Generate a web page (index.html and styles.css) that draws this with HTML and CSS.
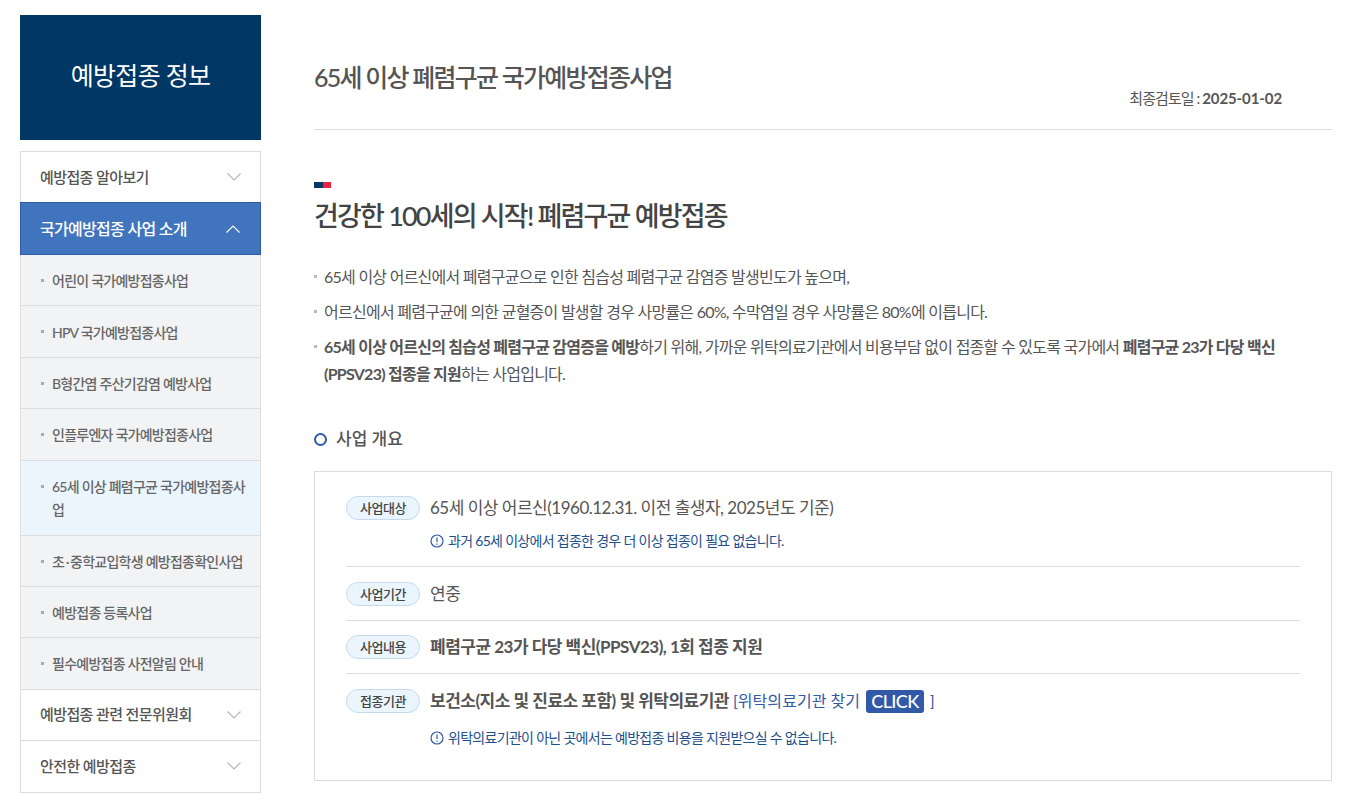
FILE: index.html
```html
<!DOCTYPE html>
<html lang="ko">
<head>
<meta charset="utf-8">
<title>65세 이상 폐렴구균 국가예방접종사업</title>
<link rel="stylesheet" href="styles.css">
</head>
<body>
<div class="page">
  <aside class="side">
    <div class="side-title">예방접종 정보</div>
    <nav class="menu">
      <a class="top">예방접종 알아보기<svg class="chev" viewBox="0 0 14 8"><path d="M.5.5 7 7 13.500.5"/></svg></a>
      <a class="top on">국가예방접종 사업 소개<svg class="chev" viewBox="0 0 14 8"><path d="M.5 7.500 7 1 13.500 7.500"/></svg></a>
      <ul class="sub">
        <li>어린이 국가예방접종사업</li>
        <li>HPV 국가예방접종사업</li>
        <li>B형간염 주산기감염 예방사업</li>
        <li>인플루엔자 국가예방접종사업</li>
        <li class="cur">65세 이상 폐렴구균 국가예방접종사업</li>
        <li>초<span class="dot">·</span>중학교입학생 예방접종확인사업</li>
        <li>예방접종 등록사업</li>
        <li>필수예방접종 사전알림 안내</li>
      </ul>
      <a class="top">예방접종 관련 전문위원회<svg class="chev" viewBox="0 0 14 8"><path d="M.5.5 7 7 13.500.5"/></svg></a>
      <a class="top">안전한 예방접종<svg class="chev" viewBox="0 0 14 8"><path d="M.5.5 7 7 13.500.5"/></svg></a>
    </nav>
  </aside>
  <main class="main">
    <header class="head">
      <h1>65세 이상 폐렴구균 국가예방접종사업</h1>
      <p class="date">최종검토일 : <b>2025-01-02</b></p>
    </header>
    <div class="mark"><i></i><i></i></div>
    <h2>건강한 100세의 시작! 폐렴구균 예방접종</h2>
    <ul class="intro">
      <li>65세 이상 어르신에서 폐렴구균으로 인한 침습성 폐렴구균 감염증 발생빈도가 높으며,</li>
      <li>어르신에서 폐렴구균에 의한 균혈증이 발생할 경우 사망률은 60%, 수막염일 경우 사망률은 80%에 이릅니다.</li>
      <li><b>65세 이상 어르신의 침습성 폐렴구균 감염증을 예방</b>하기 위해, 가까운 위탁의료기관에서 비용부담 없이 접종할 수 있도록 국가에서 <b>폐렴구균 23가 다당 백신(PPSV23) 접종을 지원</b>하는 사업입니다.</li>
    </ul>
    <h3><i class="ring"></i>사업 개요</h3>
    <section class="box">
      <div class="row first">
        <div class="line"><span class="pill">사업대상</span><span class="val">65세 이상 어르신(1960.12.31. 이전 출생자, 2025년도 기준)</span></div>
        <p class="note"><svg class="info" viewBox="0 0 14 14"><circle cx="7" cy="7" r="6"/><path d="M7 3.500v4.500M7 9.500v1.300"/></svg>과거 65세 이상에서 접종한 경우 더 이상 접종이 필요 없습니다.</p>
      </div>
      <div class="row second">
        <div class="line"><span class="pill">사업기간</span><span class="val">연중</span></div>
      </div>
      <div class="row third">
        <div class="line"><span class="pill">사업내용</span><span class="val"><b>폐렴구균 23가 다당 백신(PPSV23), 1회 접종 지원</b></span></div>
      </div>
      <div class="row last">
        <div class="line"><span class="pill">접종기관</span><span class="val"><b>보건소(지소 및 진료소 포함) 및 위탁의료기관</b> <span class="link">[위탁의료기관 찾기 <em class="click">CLICK</em> ]</span></span></div>
        <p class="note"><svg class="info" viewBox="0 0 14 14"><circle cx="7" cy="7" r="6"/><path d="M7 3.500v4.500M7 9.500v1.300"/></svg>위탁의료기관이 아닌 곳에서는 예방접종 비용을 지원받으실 수 없습니다.</p>
      </div>
    </section>
  </main>
</div>
</body>
</html>
```
FILE: styles.css
```css
* { box-sizing: border-box; }
html, body { margin: 0; height: 795px; overflow: hidden; background: #fff; }
body { font-family: Lato, "Noto Sans CJK KR", sans-serif; color: #555; }
ul { list-style: none; margin: 0; padding: 0; }
h1, h2, h3, p { margin: 0; }
.page { display: flex; gap: 53px; padding: 15px 15px 0 20px; }
.side { width: 241px; flex: none; }
.side-title { height: 125px; padding-bottom: 7px; background: #003764; color: #fff; font-size: 25px; letter-spacing: -.7px; display: flex; align-items: center; justify-content: center; }
.menu { margin-top: 11px; border: 1px solid #ddd; border-width: 1px 1px 0; }
.top { height: 51.500px; display: flex; align-items: center; justify-content: space-between; padding: 0 19px 2px; font-size: 15px; letter-spacing: -.6px; color: #555; border-bottom: 1px solid #ddd; font-weight: 500; }
.top:first-child { height: 50px; border-bottom: 0; }
.top.on { height: 53px; margin: 0 -1px; padding: 0 20px 2px 19px; background: #4075bd; color: #fff; border: 1px solid #3159a8; font-size: 16px; letter-spacing: -.7px; }
.chev { width: 14px; height: 8px; fill: none; stroke: #b5b5b5; stroke-width: 1.100; margin-top: 2px; }
.on .chev { stroke: #fff; }
.sub { background: #f2f3f5; }
.sub li { position: relative; padding: 15.200px 14px 14.200px 31px; font-size: 14px; line-height: 21px; letter-spacing: -.75px; color: #666; border-bottom: 1px solid #ddd; font-weight: 500; }
.sub li::before { content: ""; position: absolute; left: 20px; top: 24px; width: 3px; height: 3px; background: #aaa; }
.sub li.cur { background: #ebf5fe; line-height: 23px; padding: 14px 14px 14px 31px; }
.dot { margin: 0 1.500px; }
.main { flex: 1; min-width: 0; }
.head { position: relative; height: 115px; padding-top: 44px; border-bottom: 1px solid #ddd; }
h1 { font-size: 25px; font-weight: 500; line-height: 36px; letter-spacing: -1.760px; color: #555; }
.date { position: absolute; right: 50px; top: 72px; font-size: 15px; line-height: 22px; letter-spacing: -.95px; }
.date b { font-weight: 700; letter-spacing: -.1px; }
.mark { display: flex; margin-top: 52px; height: 6px; }
.mark i { height: 6px; width: 9px; background: #003764; }
.mark i + i { width: 8px; background: #e8213f; }
h2 { margin-top: 8px; font-size: 27px; line-height: 40px; font-weight: 500; letter-spacing: -1.800px; color: #444; }
.intro { margin-top: 27px; }
.intro li { position: relative; padding: 0 10px; font-size: 16px; line-height: 27px; letter-spacing: -.75px; color: #555; margin-bottom: 8px; }
.intro li:last-child { margin-bottom: 0; }
.intro li::before { content: ""; position: absolute; left: 0; top: 12px; width: 3px; height: 3px; background: #bbb; }
h3 { margin-top: 39px; display: flex; align-items: center; gap: 9px; font-size: 17px; line-height: 26px; font-weight: 500; color: #555; }
.ring { width: 13px; height: 13px; border: 2.500px solid #3159a8; border-radius: 50%; }
.box { margin-top: 19px; height: 310px; border: 1px solid #ddd; padding: 0 31px; }
.row { border-bottom: 1px solid #ddd; }
.row.first { padding: 22px 0 15px; }
.row.second { padding: 13px 0; }
.row.third { padding: 12px 0 13px; }
.row.last { border-bottom: 0; padding: 13px 0 0; }
.row.last .note { margin-top: 14px; }
.line { display: flex; align-items: center; gap: 10px; min-height: 27px; }
.pill { flex: none; width: 74px; height: 24px; border: 1px solid #c5daef; border-radius: 12px; background: #ebf5fe; font-size: 13px; font-weight: 500; letter-spacing: -.5px; color: #444; display: flex; align-items: center; justify-content: center; }
.val { font-size: 17px; line-height: 27px; letter-spacing: -.5px; color: #555; }
.val b { font-weight: 700; letter-spacing: -.5px; }
.link { color: #3159a8; font-size: 16px; letter-spacing: .05px; }
.click { display: inline-block; font-style: normal; background: #3159a8; color: #fff; font-size: 18px; font-weight: 500; line-height: 23px; padding: 0 5px; border-radius: 3px; margin: 0 2px 0 2px; vertical-align: -1px; letter-spacing: -.6px; }
.note { margin: 10px 0 0 84px; display: flex; align-items: center; gap: 4px; font-size: 14px; line-height: 20px; letter-spacing: -.7px; color: #204f8e; }
.info { width: 14px; height: 14px; fill: none; stroke: #3159a8; stroke-width: 1.200; flex: none; }
```
